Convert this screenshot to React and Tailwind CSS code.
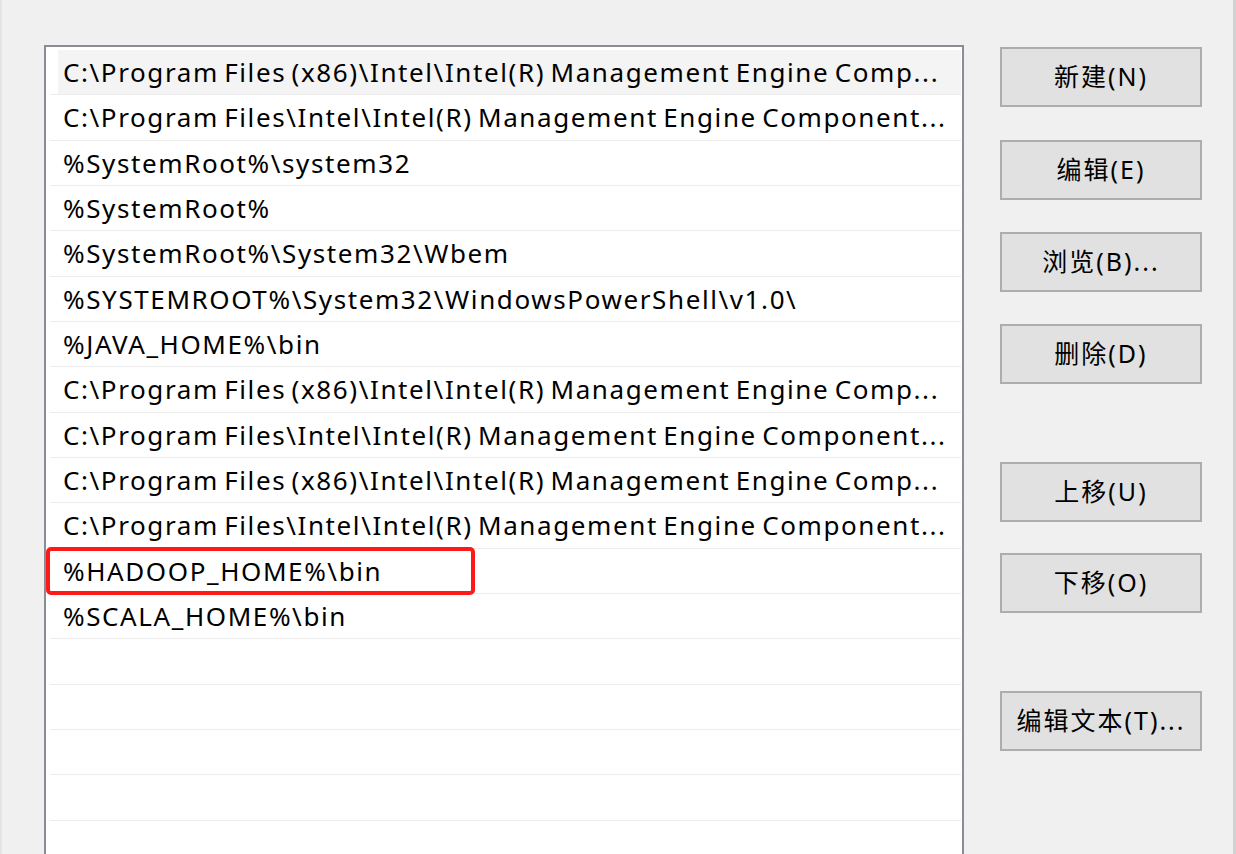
import React from "react";

const rows = [
  "C:\\Program Files (x86)\\Intel\\Intel(R) Management Engine Comp...",
  "C:\\Program Files\\Intel\\Intel(R) Management Engine Component...",
  "%SystemRoot%\\system32",
  "%SystemRoot%",
  "%SystemRoot%\\System32\\Wbem",
  "%SYSTEMROOT%\\System32\\WindowsPowerShell\\v1.0\\",
  "%JAVA_HOME%\\bin",
  "C:\\Program Files (x86)\\Intel\\Intel(R) Management Engine Comp...",
  "C:\\Program Files\\Intel\\Intel(R) Management Engine Component...",
  "C:\\Program Files (x86)\\Intel\\Intel(R) Management Engine Comp...",
  "C:\\Program Files\\Intel\\Intel(R) Management Engine Component...",
  "%HADOOP_HOME%\\bin",
  "%SCALA_HOME%\\bin",
  "",
  "",
  "",
  "",
  "",
];

const buttons = [
  { label: "新建(N)", mt: "mt-[47px]" },
  { label: "编辑(E)", mt: "mt-[33px]" },
  { label: "浏览(B)...", mt: "mt-[32px]" },
  { label: "删除(D)", mt: "mt-[32px]" },
  { label: "上移(U)", mt: "mt-[78px]" },
  { label: "下移(O)", mt: "mt-[31px]" },
  { label: "编辑文本(T)...", mt: "mt-[78px]" },
];

export default function App() {
  return (
    <div
      className="w-[1236px] h-[854px] overflow-hidden bg-[#f0f0f0] flex border-l-2 border-l-[#e4e4e4] border-r-[3px] border-r-[#d2d2d2]"
      style={{ fontFamily: '"Noto Sans", "Noto Sans CJK SC", sans-serif' }}
    >
      <div className="ml-[42px] mt-[45px] w-[920px] h-[900px] shrink-0 bg-white border-2 border-[#8a8d93] pt-[3px] pl-[4px] pr-[1px]">
        {rows.map((r, i) => (
          <div
            key={i}
            className="relative h-[45.33px] border-b-[1.5px] border-[#ececec] flex items-center text-[26px] tracking-[1.6px] [word-spacing:-3px] text-black whitespace-nowrap"
          >
            {i === 0 && (
              <div className="absolute left-[8px] right-0 top-0 bottom-0 bg-[#f4f4f4]" />
            )}
            <span className="relative pl-[13px] leading-none">{r}</span>
            {i === 11 && (
              <div className="absolute left-[-4px] top-[-2px] w-[429px] h-[48px] border-[4px] border-[#ff1a1a] rounded-[5px]" />
            )}
          </div>
        ))}
      </div>
      <div className="ml-[36px] flex flex-col w-[202px] shrink-0">
        {buttons.map((b, i) => (
          <div
            key={i}
            className={
              b.mt +
              " h-[60px] bg-[#e1e1e1] border-2 border-[#adadad] flex items-center justify-center text-[25px] tracking-[2px] text-black"
            }
          >
            {b.label}
          </div>
        ))}
      </div>
    </div>
  );
}
